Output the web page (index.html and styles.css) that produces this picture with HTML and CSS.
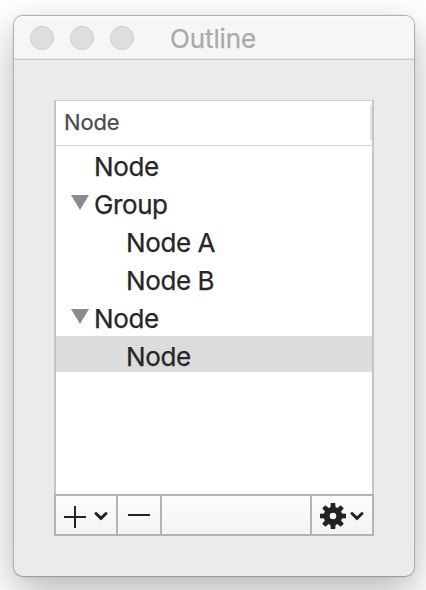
FILE: index.html
```html
<!DOCTYPE html>
<html lang="en">
<head>
<meta charset="utf-8">
<title>Outline</title>
<link rel="stylesheet" href="styles.css">
</head>
<body>
<main class="window">
  <header class="titlebar">
    <div class="controls"><i></i><i></i><i></i></div>
    <h1>Outline</h1>
  </header>
  <section class="outline">
    <div class="column-head"><span>Node</span><i class="grip"></i></div>
    <ul class="rows">
      <li>Node</li>
      <li><svg class="arrow" width="18" height="15" viewBox="0 0 18 15"><path d="M0 0H18L9 15Z"/></svg>Group</li>
      <li class="child">Node A</li>
      <li class="child">Node B</li>
      <li><svg class="arrow" width="18" height="15" viewBox="0 0 18 15"><path d="M0 0H18L9 15Z"/></svg>Node</li>
      <li class="child selected">Node</li>
    </ul>
    <footer class="toolbar">
      <button class="add" aria-label="Add"><svg width="60" height="38" viewBox="0 0 60 38"><path class="line" d="M8 21H30M19 10V32"/><path class="chevron" d="M40 17.5L45 22.3L50 17.5"/></svg></button>
      <button class="remove" aria-label="Remove"><svg width="42" height="38" viewBox="0 0 42 38"><path class="line" d="M10 19H32"/></svg></button>
      <div class="space"></div>
      <button class="action" aria-label="Actions"><svg width="60" height="38" viewBox="0 0 60 38">
        <g transform="translate(21 20)">
          <circle class="ring" r="6.3"/>
          <g id="teeth"><path d="M-2.2 -13H2.2L2.6 -8H-2.6ZM-2.2 13H2.2L2.6 8H-2.6ZM-13 -2.2V2.2L-8 2.6V-2.6ZM13 -2.2V2.2L8 2.6V-2.6Z"/></g>
          <use href="#teeth" transform="rotate(45)"/>
        </g>
        <path class="chevron" d="M40 17.5L45 22.3L50 17.5"/></svg></button>
    </footer>
  </section>
</main>
</body>
</html>
```
FILE: styles.css
```css
* { box-sizing: border-box; }
body {
  margin: 0;
  width: 426px;
  height: 590px;
  padding: 15px 11px 13px 13px;
  overflow: hidden;
  background: #fff;
  font-family: Inter, "Liberation Sans", sans-serif;
  color: #262626;
}
.window {
  height: 562px;
  border: 1px solid #b0b0b0;
  border-bottom-color: #9c9c9c;
  border-radius: 10px;
  background: #ebebeb;
  box-shadow: 0 14px 38px rgba(0, 0, 0, .29), 0 0 2px rgba(0, 0, 0, .12);
}
.titlebar {
  position: relative;
  display: flex;
  align-items: center;
  justify-content: center;
  height: 44px;
  padding-bottom: 1px;
  border-bottom: 1px solid #c9c9c9;
  border-radius: 9px 9px 0 0;
  background: #f6f6f6;
  box-shadow: inset 0 1px #fcfcfc, inset 0 -1px #e5e5e5;
}
.controls {
  position: absolute;
  left: 16px;
  top: 10px;
  display: flex;
  gap: 16px;
}
.controls i {
  width: 24px;
  height: 24px;
  border: 1px solid #cfcfcf;
  border-radius: 50%;
  background: #dedede;
}
h1 {
  margin: 3px 2px 0 0;
  font-size: 26px;
  line-height: 32px;
  font-weight: 400;
  letter-spacing: -.15px;
  -webkit-text-stroke: .25px;
  color: #aaa;
}
.outline {
  display: flex;
  flex-direction: column;
  width: 320px;
  height: 436px;
  margin: 40px 0 0 40px;
  background: linear-gradient(#c5c5c5, #c5c5c5) 0 0 / 2px 100% no-repeat, linear-gradient(#c5c5c5, #c5c5c5) 100% 0 / 2px 100% no-repeat, #fff;
}
.column-head {
  display: flex;
  justify-content: space-between;
  height: 46px;
  margin: 0 2px;
  padding-left: 8px;
  border-top: 1px solid #cfcfcf;
  border-bottom: 1px solid #d2d2d2;
  font-size: 22px;
  letter-spacing: -.15px;
  -webkit-text-stroke: .25px;
  line-height: 43px;
  color: #4c4c4c;
}
.grip {
  width: 2px;
  height: 35px;
  margin-top: 4px;
  background: #e2e2e2;
}
.rows {
  flex: 1;
  margin: 0 2px;
  padding: 0;
  list-style: none;
  font-size: 26px;
  letter-spacing: -.4px;
  -webkit-text-stroke: .25px;
}
.rows li {
  position: relative;
  height: 36px;
  margin-bottom: 2px;
  padding: 3px 0 0 38px;
  line-height: 36px;
}
.rows .child { padding-left: 70px; }
.rows .selected { background: #dcdcdc; }
.arrow {
  position: absolute;
  left: 15px;
  top: 11px;
  fill: #8c8c8c;
}
.toolbar {
  display: flex;
  height: 42px;
  border: 2px solid #b3b3b3;
  background: linear-gradient(#fcfcfc, #f3f3f3);
}
.toolbar button {
  margin: 0;
  padding: 0;
  border: 0 solid #b3b3b3;
  background: none;
}
.toolbar svg { display: block; }
.toolbar .add, .toolbar .remove { border-right-width: 2px; }
.toolbar .action { border-left-width: 2px; }
.space { flex: 1; }
.line { fill: none; stroke: #222; stroke-width: 2; }
.chevron { fill: none; stroke: #222; stroke-width: 3; stroke-linecap: round; stroke-linejoin: miter; }
.action g { fill: #222; }
.action .ring { fill: none; stroke: #222; stroke-width: 6; }
```
